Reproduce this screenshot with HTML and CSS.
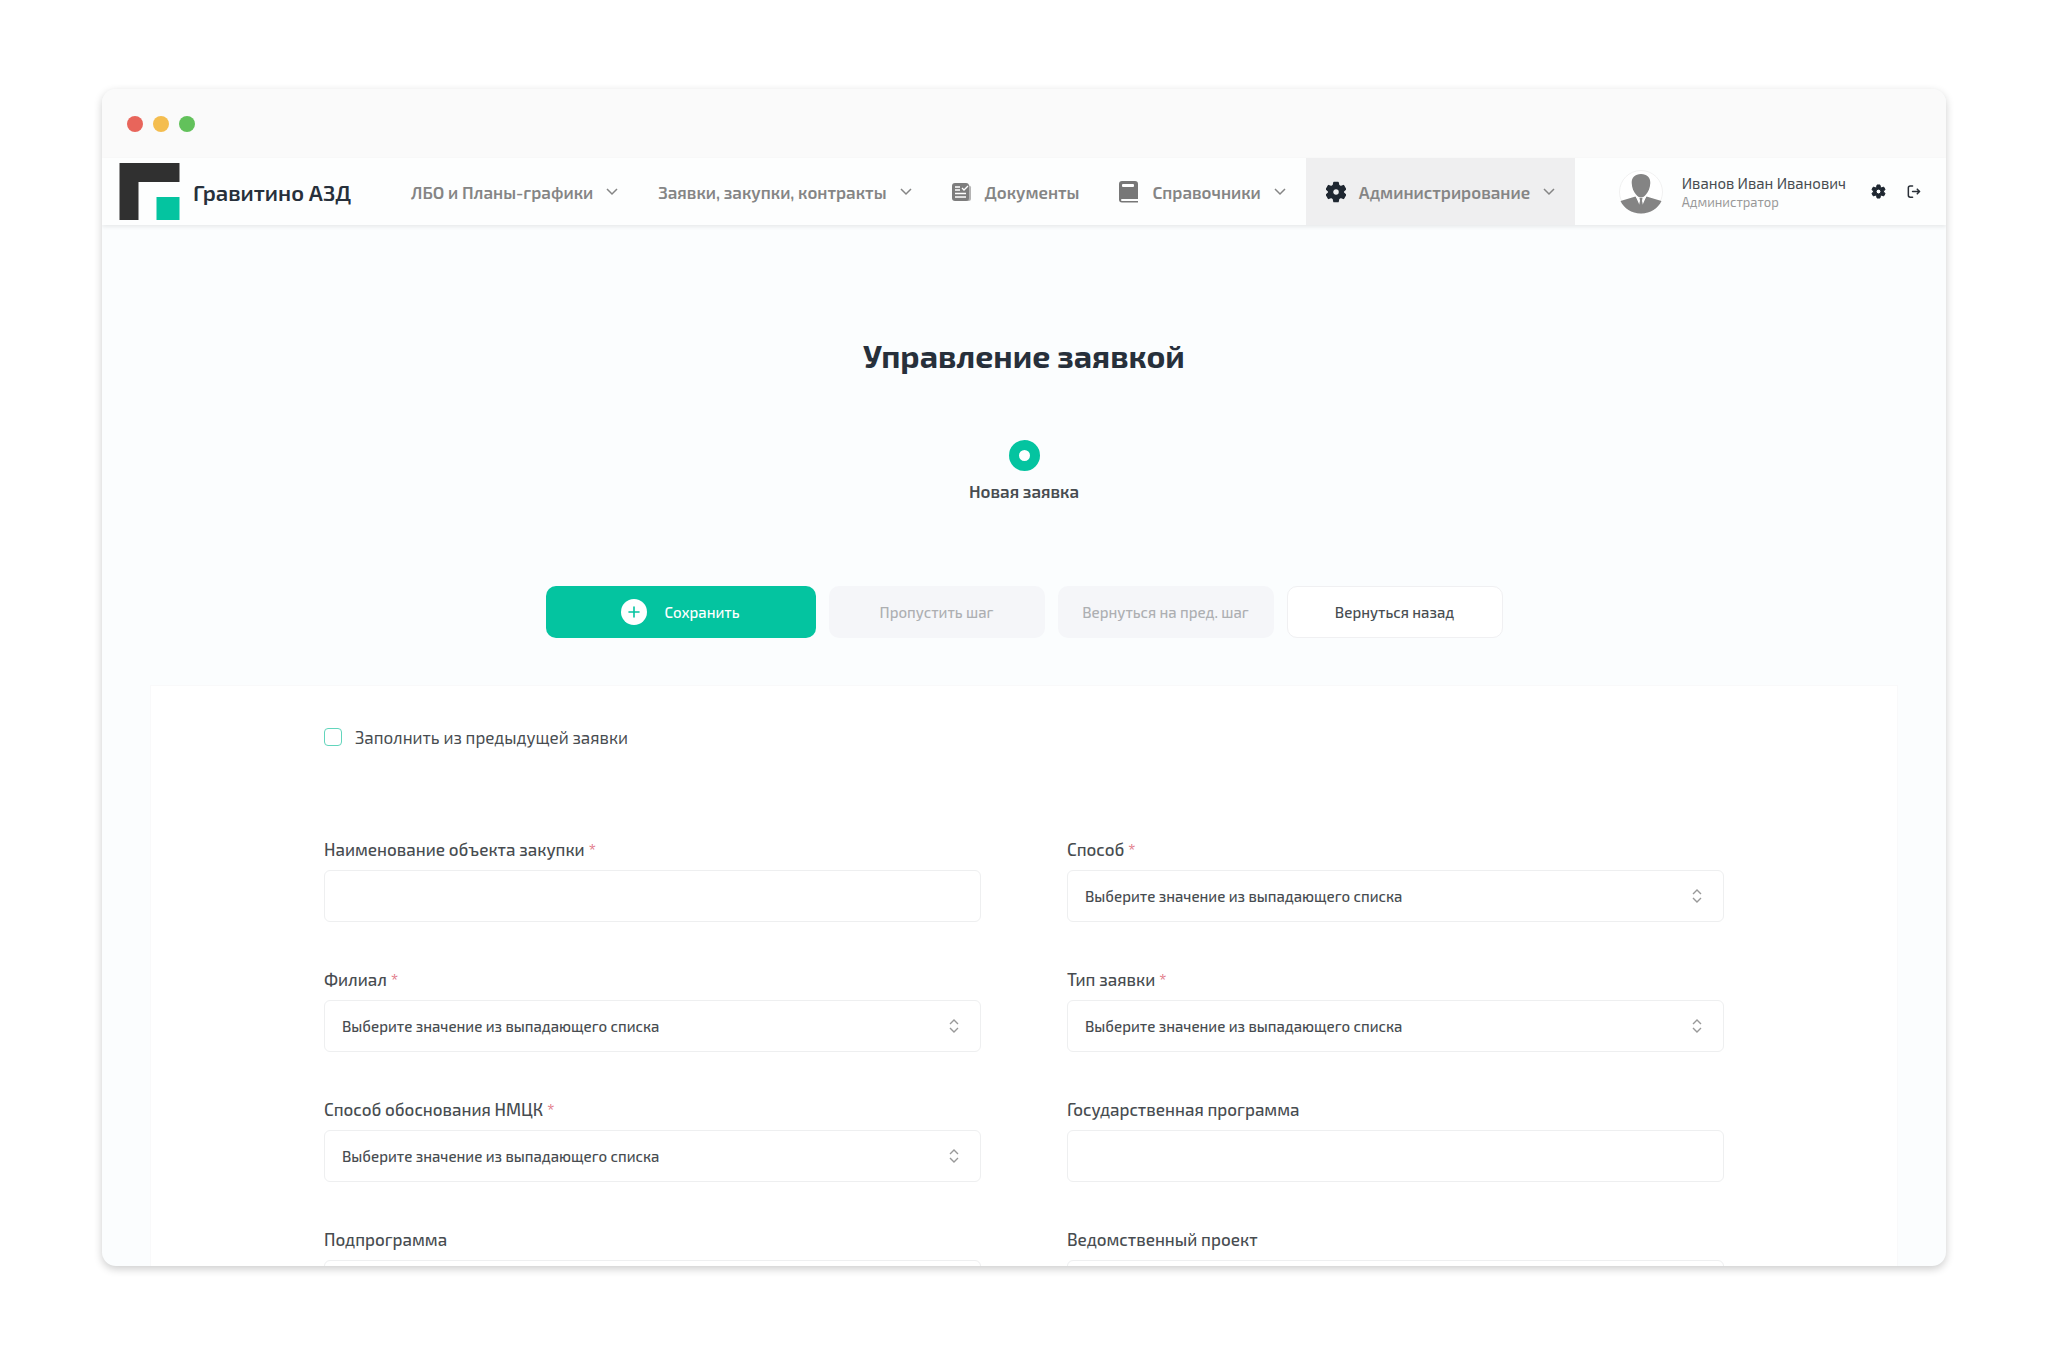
FILE: index.html
```html
<!DOCTYPE html>
<html lang="ru">
<head>
    <meta charset="UTF-8">
    <meta name="viewport" content="width=device-width, initial-scale=1.0">
    <title>Управление заявкой</title>
    <link rel="stylesheet" href="styles.css">
</head>
<body>
    <div class="window">
        <div class="titlebar">
            <span class="dot dot-red"></span>
            <span class="dot dot-yellow"></span>
            <span class="dot dot-green"></span>
        </div>

        <header class="header">
            <a href="#" class="brand">
                <svg class="brand-logo" viewBox="0 0 60 57">
                    <path d="M0 0h60v19H19v38H0z" fill="#303030"/>
                    <path d="M37 34h23v23H37z" fill="#04c4a0"/>
                </svg>
                <span>Гравитино АЗД</span>
            </a>

            <nav class="nav">
                <a href="#" class="nav-item">
                    <span>ЛБО и Планы-графики</span>
                    <svg class="chevron" viewBox="0 0 12 8"><path d="M1 1l5 5 5-5"/></svg>
                </a>
                <a href="#" class="nav-item">
                    <span>Заявки, закупки, контракты</span>
                    <svg class="chevron" viewBox="0 0 12 8"><path d="M1 1l5 5 5-5"/></svg>
                </a>
                <a href="#" class="nav-item">
                    <svg class="nav-icon" viewBox="0 0 20 22">
                        <path d="M17 4.500q2 0 2 2v11q0 2.500-2.500 2.500H14z" fill="#b4b4b4"/>
                        <rect x="0" y="2" width="17" height="18" rx="3" fill="#7d7d7d"/>
                        <path d="M3 6h5M3 9h5M3 12.500h11M3 16h11M10 7l2 2 4-4" fill="none" stroke="#fff" stroke-width="1.300"/>
                    </svg>
                    <span>Документы</span>
                </a>
                <a href="#" class="nav-item">
                    <svg class="nav-icon" viewBox="0 0 20 22">
                        <path d="M3 0h13q3 0 3 3v15H3q-1 0-1 1t1 1H19v1.500H3q-3 0-3-3V3q0-3 3-3z" fill="#777"/>
                        <rect x="3" y="3" width="12" height="3" rx="1" fill="#fff"/>
                    </svg>
                    <span>Справочники</span>
                    <svg class="chevron" viewBox="0 0 12 8"><path d="M1 1l5 5 5-5"/></svg>
                </a>
                <a href="#" class="nav-item nav-item-active">
                    <svg class="nav-icon" viewBox="1 1 22 22"><use href="#gear"/></svg>
                    <span>Администрирование</span>
                    <svg class="chevron" viewBox="0 0 12 8"><path d="M1 1l5 5 5-5"/></svg>
                </a>
            </nav>

            <div class="user">
                <svg class="avatar" viewBox="0 0 44 44">
                    <circle cx="22" cy="22" r="21.500" fill="#fff" stroke="#f1f1f1"/>
                    <path d="M22 4c6 0 9.500 3.500 9.300 9-.2 5-2 9-4.300 11.500-1.500 2-3 3-5 3s-3.500-1-5-3C14.700 22 12.900 18 12.700 13 12.500 7.500 16 4 22 4z" fill="#848484"/>
                    <path d="M16.500 26.500L1.500 31C5 38.500 12.500 43.500 22 43.500S39 38.500 42.500 31l-15-4.500L22 34z" fill="#848484"/>
                    <path d="M16.500 26l5.500 3 5.500-3-4 9-.5-4h-2l-.5 4z" fill="#fff"/>
                    <path d="M20.500 28h3l-.5 2.500 1 7-2 3-2-3 1-7z" fill="#848484"/>
                </svg>
                <div class="user-info">
                    <span class="user-name">Иванов Иван Иванович</span>
                    <span class="user-role">Администратор</span>
                </div>
                <button type="button" class="icon-button" aria-label="Настройки">
                    <svg viewBox="0 0 24 24">
                        <path id="gear" fill="#1f2731" fill-rule="evenodd" stroke="#1f2731" stroke-width="1.500" stroke-linejoin="round" d="M9.700 1.500h4.600l.7 3.300 2 1.200 3.300-1.100 2.300 4-2.500 2.300v1.600l2.500 2.300-2.300 4-3.300-1.100-2 1.200-.7 3.300H9.700L9 19.200l-2-1.200-3.300 1.100-2.300-4 2.500-2.300v-1.600L1.400 8.900l2.300-4L7 6l2-1.200zM12 8.200a3.800 3.800 0 1 0 0 7.600 3.800 3.800 0 0 0 0-7.600z"/>
                    </svg>
                </button>
                <button type="button" class="icon-button" aria-label="Выйти">
                    <svg viewBox="0 0 16 16" fill="none" stroke="#2a3038" stroke-width="1.600" stroke-linecap="round" stroke-linejoin="round">
                        <path d="M7 2H4.500Q2.500 2 2.500 4v8q0 2 2 2H7M7 8h7.500M12 5.500L14.500 8 12 10.500"/>
                    </svg>
                </button>
            </div>
        </header>

        <main class="content">
            <h1 class="title">Управление заявкой</h1>

            <div class="step">
                <span class="step-circle"></span>
                <span class="step-name">Новая заявка</span>
            </div>

            <div class="actions">
                <button type="submit" form="request-form" class="button button-primary">
                    <svg class="plus" viewBox="0 0 26 26">
                        <circle cx="13" cy="13" r="13" fill="#fff"/>
                        <path d="M13 8v10M8 13h10" stroke="#04c4a0" stroke-width="1.600" stroke-linecap="round"/>
                    </svg>
                    <span>Сохранить</span>
                </button>
                <button type="button" class="button" disabled>Пропустить шаг</button>
                <button type="button" class="button" disabled>Вернуться на пред. шаг</button>
                <button type="button" class="button button-outline">Вернуться назад</button>
            </div>

            <form class="card" id="request-form">
                <label class="check">
                    <input type="checkbox" class="check-input">
                    <span>Заполнить из предыдущей заявки</span>
                </label>

                <div class="fields">
                    <div class="field">
                        <label for="name">Наименование объекта закупки <span class="required">*</span></label>
                        <input type="text" id="name" class="control">
                    </div>
                    <div class="field">
                        <label for="method">Способ <span class="required">*</span></label>
                        <select id="method" class="control select">
                            <option>Выберите значение из выпадающего списка</option>
                        </select>
                    </div>
                    <div class="field">
                        <label for="branch">Филиал <span class="required">*</span></label>
                        <select id="branch" class="control select">
                            <option>Выберите значение из выпадающего списка</option>
                        </select>
                    </div>
                    <div class="field">
                        <label for="type">Тип заявки <span class="required">*</span></label>
                        <select id="type" class="control select">
                            <option>Выберите значение из выпадающего списка</option>
                        </select>
                    </div>
                    <div class="field">
                        <label for="reason">Способ обоснования НМЦК <span class="required">*</span></label>
                        <select id="reason" class="control select">
                            <option>Выберите значение из выпадающего списка</option>
                        </select>
                    </div>
                    <div class="field">
                        <label for="program">Государственная программа</label>
                        <input type="text" id="program" class="control">
                    </div>
                    <div class="field">
                        <label for="subprogram">Подпрограмма</label>
                        <input type="text" id="subprogram" class="control">
                    </div>
                    <div class="field">
                        <label for="project">Ведомственный проект</label>
                        <input type="text" id="project" class="control">
                    </div>
                </div>
            </form>
        </main>
    </div>
</body>
</html>
```
FILE: styles.css
```css
* {
    box-sizing: border-box;
}
body {
    margin: 0;
    height: 100vh;
    padding: 89px 102px 99px;
    background-color: #fff;
    font-family: "Exo 2", "Noto Sans", sans-serif;
    font-size: 17px;
    color: #474c50;
}
button, input, select {
    font: inherit;
    color: inherit;
}
.window {
    height: 100%;
    display: flex;
    flex-direction: column;
    overflow: hidden;
    border-radius: 14px;
    background-color: #fbfdfe;
    box-shadow: 0 3px 8px rgba(0, 0, 0, 0.2);
}

/* window title bar */
.titlebar {
    flex: none;
    height: 69px;
    display: flex;
    align-items: center;
    gap: 10px;
    padding: 0 25px;
    background-color: #fafafa;
}
.dot {
    width: 16px;
    height: 16px;
    border-radius: 50%;
}
.dot-red {
    background-color: #e8655b;
}
.dot-yellow {
    background-color: #f4bd4f;
}
.dot-green {
    background-color: #62c15b;
}

/* header */
.header {
    flex: none;
    height: 67px;
    display: flex;
    align-items: stretch;
    padding: 0 21px 0 17px;
    background-color: #fdfefe;
    box-shadow: 0 2px 4px rgba(0, 0, 0, 0.08);
}
.brand {
    display: flex;
    align-items: center;
    gap: 13px;
    margin-right: 40px;
    font-size: 22px;
    font-weight: 600;
    color: #27303b;
    text-decoration: none;
    white-space: nowrap;
}
.brand-logo {
    width: 61px;
    height: 57px;
}
.nav {
    display: flex;
}
.nav-item {
    display: flex;
    align-items: center;
    gap: 13px;
    padding: 0 20px;
    font-weight: 600;
    color: #858585;
    text-decoration: none;
    white-space: nowrap;
}
.nav-item-active {
    background-color: #efeff0;
}
.nav-icon {
    width: 20px;
    height: 22px;
}
.chevron {
    width: 12px;
    height: 8px;
    fill: none;
    stroke: #858585;
    stroke-width: 1.5;
}
.user {
    display: flex;
    align-items: center;
    margin-left: auto;
}
.avatar {
    width: 44px;
    height: 44px;
    margin-right: 19px;
}
.user-info {
    display: flex;
    flex-direction: column;
    margin-right: 9px;
    white-space: nowrap;
}
.user-name {
    font-size: 15px;
    line-height: 20px;
}
.user-role {
    font-size: 13px;
    line-height: 18px;
    color: #999;
}
.icon-button {
    display: flex;
    padding: 4px;
    margin-left: 12px;
    border: none;
    background: none;
    cursor: pointer;
}
.icon-button svg {
    width: 15px;
    height: 15px;
}

/* content */
.content {
    flex: 1;
    min-height: 0;
    padding: 107px 48px 0;
}
.title {
    margin: 0 0 62px;
    font-size: 32px;
    line-height: 46px;
    font-weight: 700;
    text-align: center;
    color: #27303b;
}
.step {
    display: flex;
    flex-direction: column;
    align-items: center;
    gap: 7px;
    margin-bottom: 82px;
}
.step-circle {
    width: 31px;
    height: 31px;
    border: 10px solid #04c4a0;
    border-radius: 50%;
    background-color: #fff;
}
.step-name {
    line-height: 26px;
    font-weight: 600;
}
.actions {
    display: flex;
    justify-content: center;
    gap: 13px;
    margin-bottom: 47px;
}
.button {
    display: flex;
    align-items: center;
    justify-content: center;
    gap: 17px;
    width: 216px;
    height: 52px;
    padding: 0;
    border: none;
    border-radius: 10px;
    font-size: 15px;
    font-weight: 500;
    cursor: pointer;
}
.button:disabled {
    background-color: #f5f6f9;
    color: #adafb2;
    cursor: default;
}
.button-primary {
    width: 270px;
    background-color: #04c4a0;
    color: #fff;
}
.button-outline {
    border: 1px solid #f0f0f2;
    background-color: #fff;
}
.plus {
    width: 26px;
    height: 26px;
}

/* form */
.card {
    padding: 38px 173px;
    border: 1px solid #f9f9fa;
    background-color: #fff;
}
.check {
    display: flex;
    align-items: center;
    gap: 13px;
    margin-bottom: 86px;
    line-height: 26px;
}
.check-input {
    appearance: none;
    width: 18px;
    height: 18px;
    margin: 0;
    border: 1px solid #62d5bc;
    border-radius: 4px;
}
.check-input:checked {
    background-color: #04c4a0;
}
.fields {
    display: grid;
    grid-template-columns: 1fr 1fr;
    gap: 44px 86px;
}
.field {
    display: flex;
    flex-direction: column;
    gap: 8px;
    line-height: 26px;
    font-weight: 500;
}
.required {
    color: #e0707f;
}
.control {
    width: 100%;
    height: 52px;
    padding: 0 17px;
    border: 1px solid #eeeff0;
    border-radius: 6px;
    background-color: #fff;
    font-size: 15px;
}
.select {
    appearance: none;
    background-image: url("data:image/svg+xml,%3Csvg xmlns='http://www.w3.org/2000/svg' viewBox='0 0 10 14' fill='none' stroke='%23999' stroke-width='1.4'%3E%3Cpath d='M1 5l4-4 4 4M1 9l4 4 4-4'/%3E%3C/svg%3E");
    background-repeat: no-repeat;
    background-position: right 21px center;
    background-size: 10px 14px;
}
```
